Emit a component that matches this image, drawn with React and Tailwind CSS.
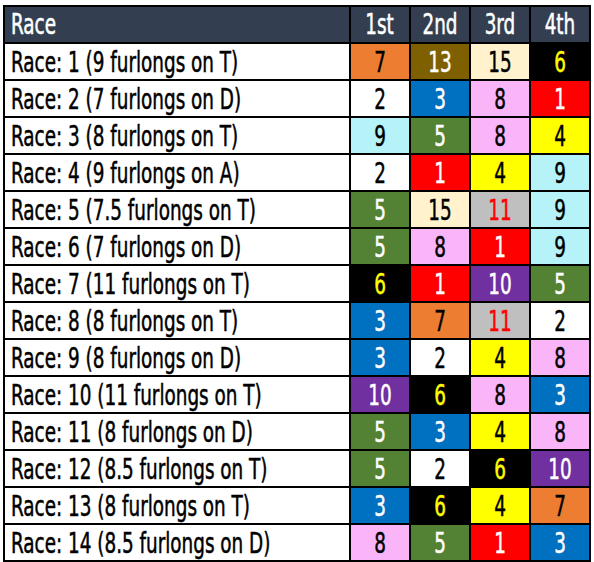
const colors = {
  1: 'bg-[#ff0000] text-white',
  2: 'bg-white text-black',
  3: 'bg-[#0070c0] text-white',
  4: 'bg-[#ffff00] text-black',
  5: 'bg-[#548235] text-white',
  6: 'bg-black text-[#ffff00]',
  7: 'bg-[#ed7d31] text-black',
  8: 'bg-[#f9b5f7] text-black',
  9: 'bg-[#b5f3f9] text-black',
  10: 'bg-[#7030a0] text-white',
  11: 'bg-[#bfbfbf] text-[#ff0000]',
  13: 'bg-[#7f6000] text-white',
  15: 'bg-[#fff2cc] text-black',
};

const races = [
  ['9 furlongs on T', [7, 13, 15, 6]],
  ['7 furlongs on D', [2, 3, 8, 1]],
  ['8 furlongs on T', [9, 5, 8, 4]],
  ['9 furlongs on A', [2, 1, 4, 9]],
  ['7.5 furlongs on T', [5, 15, 11, 9]],
  ['7 furlongs on D', [5, 8, 1, 9]],
  ['11 furlongs on T', [6, 1, 10, 5]],
  ['8 furlongs on T', [3, 7, 11, 2]],
  ['8 furlongs on D', [3, 2, 4, 8]],
  ['11 furlongs on T', [10, 6, 8, 3]],
  ['8 furlongs on D', [5, 3, 4, 8]],
  ['8.5 furlongs on T', [5, 2, 6, 10]],
  ['8 furlongs on T', [3, 6, 4, 7]],
  ['8.5 furlongs on D', [8, 5, 1, 3]],
];

const font = { fontFamily: '"DejaVu Sans Condensed", "Liberation Sans", sans-serif' };

// narrow glyphs to match the condensed face in the sheet
const Txt = ({ children, left }) => (
  <span
    className={`inline-block scale-x-[0.73] whitespace-nowrap [-webkit-text-stroke:0.5px_currentColor] ${
      left ? 'origin-left' : 'origin-center'
    }`}
  >
    {children}
  </span>
);

export default function App() {
  return (
    <div className="bg-white w-[594px] h-[562px] pl-[3px] pt-[5px]" style={font}>
      <div className="grid grid-cols-[344px_58px_58px_58px_58px] auto-rows-[35px] gap-[2px] bg-black p-[2px] w-[588px]">
        <div className="bg-[#333f50] text-white text-[28px] leading-[36px] pl-[6px] overflow-hidden">
          <Txt left>Race</Txt>
        </div>
        {['1st', '2nd', '3rd', '4th'].map((h) => (
          <div key={h} className="bg-[#333f50] text-white text-[28px] leading-[36px] text-center overflow-hidden">
            <Txt>{h}</Txt>
          </div>
        ))}
        {races.map(([desc, places], i) => (
          <>
            <div key={'r' + i} className="bg-white text-black text-[28px] leading-[37px] pl-[6px] overflow-hidden">
              <Txt left>Race: {i + 1} ({desc})</Txt>
            </div>
            {places.map((n, j) => (
              <div key={i + '-' + j} className={`${colors[n]} text-[28px] leading-[37px] text-center overflow-hidden`}>
                <Txt>{n}</Txt>
              </div>
            ))}
          </>
        ))}
      </div>
    </div>
  );
}
